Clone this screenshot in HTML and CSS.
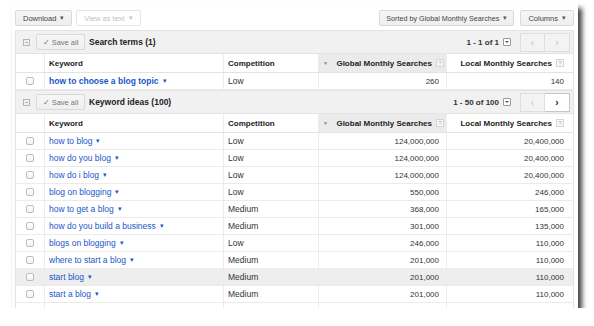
FILE: index.html
```html
<!DOCTYPE html>
<html lang="en">

<head>
    <meta charset="UTF-8">
    <title>Keyword ideas</title>
    <link rel="stylesheet" href="styles.css">
</head>

<body>

    <div class="shot">

        <!-- top toolbar -->
        <div class="toolbar">
            <div class="tools-left">
                <span class="btn">Download <span class="caret">&#9662;</span></span>
                <span class="btn disabled">View as text <span class="caret">&#9662;</span></span>
            </div>
            <div class="tools-right">
                <span class="btn sorted">Sorted by Global Monthly Searches <span class="caret">&#9662;</span></span>
                <span class="btn">Columns <span class="caret">&#9662;</span></span>
            </div>
        </div>

        <!-- search terms -->
        <div class="bar">
            <span class="collapse"></span>
            <span class="btn save">&#10003; Save all</span>
            <span class="bar-title">Search terms (1)</span>
            <span class="pager-text">1 - 1 of 1</span>
            <span class="pager-menu"></span>
            <span class="pager">
                <span class="page-btn">&#8249;</span>
                <span class="page-btn">&#8250;</span>
            </span>
        </div>

        <div class="row head">
            <div class="cell"></div>
            <div class="cell">Keyword</div>
            <div class="cell">Competition</div>
            <div class="cell num sorted-col"><span class="sort-arrow">&#9660;</span>Global Monthly Searches <span class="help">?</span></div>
            <div class="cell num last">Local Monthly Searches <span class="help">?</span></div>
        </div>
        <div class="row">
            <div class="cell check"><span class="box"></span></div>
            <div class="cell"><a class="kw main" href="#">how to choose a blog topic</a> <span class="kw-caret">&#9662;</span></div>
            <div class="cell">Low</div>
            <div class="cell num">260</div>
            <div class="cell num last">140</div>
        </div>

        <!-- keyword ideas -->
        <div class="bar">
            <span class="collapse"></span>
            <span class="btn save">&#10003; Save all</span>
            <span class="bar-title">Keyword ideas (100)</span>
            <span class="pager-text">1 - 50 of 100</span>
            <span class="pager-menu"></span>
            <span class="pager">
                <span class="page-btn">&#8249;</span>
                <span class="page-btn on">&#8250;</span>
            </span>
        </div>

        <div class="row head">
            <div class="cell"></div>
            <div class="cell">Keyword</div>
            <div class="cell">Competition</div>
            <div class="cell num sorted-col"><span class="sort-arrow">&#9660;</span>Global Monthly Searches <span class="help">?</span></div>
            <div class="cell num last">Local Monthly Searches <span class="help">?</span></div>
        </div>

        <div class="row">
            <div class="cell check"><span class="box"></span></div>
            <div class="cell"><a class="kw" href="#">how to blog</a> <span class="kw-caret">&#9662;</span></div>
            <div class="cell">Low</div>
            <div class="cell num">124,000,000</div>
            <div class="cell num last">20,400,000</div>
        </div>
        <div class="row">
            <div class="cell check"><span class="box"></span></div>
            <div class="cell"><a class="kw" href="#">how do you blog</a> <span class="kw-caret">&#9662;</span></div>
            <div class="cell">Low</div>
            <div class="cell num">124,000,000</div>
            <div class="cell num last">20,400,000</div>
        </div>
        <div class="row">
            <div class="cell check"><span class="box"></span></div>
            <div class="cell"><a class="kw" href="#">how do i blog</a> <span class="kw-caret">&#9662;</span></div>
            <div class="cell">Low</div>
            <div class="cell num">124,000,000</div>
            <div class="cell num last">20,400,000</div>
        </div>
        <div class="row">
            <div class="cell check"><span class="box"></span></div>
            <div class="cell"><a class="kw" href="#">blog on blogging</a> <span class="kw-caret">&#9662;</span></div>
            <div class="cell">Low</div>
            <div class="cell num">550,000</div>
            <div class="cell num last">246,000</div>
        </div>
        <div class="row">
            <div class="cell check"><span class="box"></span></div>
            <div class="cell"><a class="kw" href="#">how to get a blog</a> <span class="kw-caret">&#9662;</span></div>
            <div class="cell">Medium</div>
            <div class="cell num">368,000</div>
            <div class="cell num last">165,000</div>
        </div>
        <div class="row">
            <div class="cell check"><span class="box"></span></div>
            <div class="cell"><a class="kw" href="#">how do you build a business</a> <span class="kw-caret">&#9662;</span></div>
            <div class="cell">Medium</div>
            <div class="cell num">301,000</div>
            <div class="cell num last">135,000</div>
        </div>
        <div class="row">
            <div class="cell check"><span class="box"></span></div>
            <div class="cell"><a class="kw" href="#">blogs on blogging</a> <span class="kw-caret">&#9662;</span></div>
            <div class="cell">Low</div>
            <div class="cell num">246,000</div>
            <div class="cell num last">110,000</div>
        </div>
        <div class="row">
            <div class="cell check"><span class="box"></span></div>
            <div class="cell"><a class="kw" href="#">where to start a blog</a> <span class="kw-caret">&#9662;</span></div>
            <div class="cell">Medium</div>
            <div class="cell num">201,000</div>
            <div class="cell num last">110,000</div>
        </div>
        <div class="row hover">
            <div class="cell check"><span class="box"></span></div>
            <div class="cell"><a class="kw" href="#">start blog</a> <span class="kw-caret">&#9662;</span></div>
            <div class="cell">Medium</div>
            <div class="cell num">201,000</div>
            <div class="cell num last">110,000</div>
        </div>
        <div class="row">
            <div class="cell check"><span class="box"></span></div>
            <div class="cell"><a class="kw" href="#">start a blog</a> <span class="kw-caret">&#9662;</span></div>
            <div class="cell">Medium</div>
            <div class="cell num">201,000</div>
            <div class="cell num last">110,000</div>
        </div>
        <div class="row">
            <div class="cell check"></div>
            <div class="cell"></div>
            <div class="cell"></div>
            <div class="cell num"></div>
            <div class="cell num last"></div>
        </div>

    </div>

</body>

</html>
```

FILE: styles.css
```css
body {
    margin: 0;
    background: #fff;
    font-family: "Liberation Sans", Arial, sans-serif;
    font-size: 8px;
    color: #222;
}

.shot {
    box-sizing: border-box;
    width: 566px;
    height: 305px;
    margin: 3px 0 0 12px;
    padding: 0 4px 0 3px;
    background: #fff;
    overflow: hidden;
    box-shadow: 4px 5px 5px rgba(0, 0, 0, 0.75);
}

/* toolbar */

.toolbar {
    display: flex;
    justify-content: space-between;
    height: 27px;
    padding-top: 7px;
    box-sizing: border-box;
}

.tools-left,
.tools-right {
    display: flex;
    align-items: flex-start;
}

.tools-left {
    gap: 4px;
}

.tools-right {
    gap: 6px;
}

.btn {
    display: inline-flex;
    align-items: center;
    justify-content: center;
    box-sizing: border-box;
    height: 16px;
    padding: 0 7px;
    border: 1px solid #d9d9d9;
    border-radius: 2px;
    background: linear-gradient(#f6f6f6, #efefef);
    color: #444;
    font-size: 7.5px;
    white-space: nowrap;
}

.btn.sorted {
    padding: 0 6px;
    font-size: 7.2px;
}

.btn .caret {
    margin-left: 4px;
    font-size: 7px;
    color: #555;
}

.btn.disabled {
    background: #fff;
    border-color: #e6e6e6;
    color: #c2c2c2;
}

.btn.disabled .caret {
    color: #c2c2c2;
}

/* section bars */

.bar {
    display: flex;
    align-items: center;
    box-sizing: border-box;
    height: 23px;
    background: #f1f1f1;
    border: 1px solid #e3e3e3;
    border-bottom: none;
}

.collapse {
    box-sizing: border-box;
    width: 7px;
    height: 7px;
    margin: 0 6px 0 7px;
    border: 1px solid #b5b5b5;
    background: linear-gradient(#b5b5b5, #b5b5b5) center / 3px 1px no-repeat;
}

.btn.save {
    width: 49px;
    padding: 0;
    color: #777;
    font-size: 7.5px;
}

.bar-title {
    flex: 1;
    margin-left: 4px;
    font-size: 8.5px;
    font-weight: bold;
    color: #222;
}

.pager-text {
    font-weight: bold;
    font-size: 8px;
    color: #333;
}

.pager-menu {
    box-sizing: border-box;
    width: 8px;
    height: 8px;
    margin: 0 9px 0 4px;
    border: 1px solid #999;
    border-radius: 1px;
    background: #fff;
    position: relative;
}

.pager-menu::after {
    content: "";
    position: absolute;
    left: 1px;
    top: 2px;
    border-left: 2px solid transparent;
    border-right: 2px solid transparent;
    border-top: 2px solid #555;
}

.pager {
    display: flex;
    margin-right: 3px;
}

.page-btn {
    display: flex;
    align-items: center;
    justify-content: center;
    box-sizing: border-box;
    width: 25px;
    height: 19px;
    border: 1px solid #dedede;
    background: #f3f3f3;
    color: #c4c4c4;
    font-size: 10px;
}

.page-btn + .page-btn {
    border-left: none;
}

.page-btn.on {
    background: #fff;
    border-color: #c6c6c6;
    color: #222;
    font-weight: bold;
}

/* grid rows */

.row {
    display: grid;
    grid-template-columns: 29px 179px 95px 128px 127px;
    box-sizing: border-box;
    height: 17px;
    border-bottom: 1px solid #ebebeb;
    border-left: 1px solid #e3e3e3;
}

.row.head {
    height: 20px;
    border-top: 1px solid #e3e3e3;
    border-bottom-color: #e3e3e3;
    font-weight: bold;
    color: #222;
}

.row.hover {
    background: #eeeeee;
}

.cell {
    display: flex;
    align-items: center;
    padding-left: 4px;
    border-right: 1px solid #ececec;
    white-space: nowrap;
    overflow: hidden;
    font-size: 8.5px;
    color: #333;
}

.row.head .cell {
    font-size: 8px;
    color: #222;
}

.cell.check {
    justify-content: center;
    padding: 0;
}

.cell.num {
    justify-content: flex-end;
    padding-right: 7px;
    font-size: 8px;
}

.cell.last {
    padding-right: 9px;
    border-right-color: #e3e3e3;
}

.row.head .cell.sorted-col {
    background: #ebebeb;
    padding-right: 2px;
}

.sort-arrow {
    margin-right: auto;
    font-size: 5px;
    color: #888;
}

.help {
    display: inline-flex;
    align-items: center;
    justify-content: center;
    box-sizing: border-box;
    width: 8px;
    height: 8px;
    margin-left: 4px;
    border: 1px solid #d5d5d5;
    background: #f7f7f7;
    color: #aaa;
    font-size: 5.5px;
    font-weight: normal;
}

.box {
    box-sizing: border-box;
    width: 8px;
    height: 8px;
    border: 1px solid #bdbdbd;
    border-radius: 2px;
    background: linear-gradient(#fff, #f2f2f2);
}

.kw {
    color: #1a57c9;
    text-decoration: none;
}

.kw.main {
    font-weight: bold;
}

.kw-caret {
    margin-left: 4px;
    font-size: 6.5px;
    color: #1a57c9;
}
```
